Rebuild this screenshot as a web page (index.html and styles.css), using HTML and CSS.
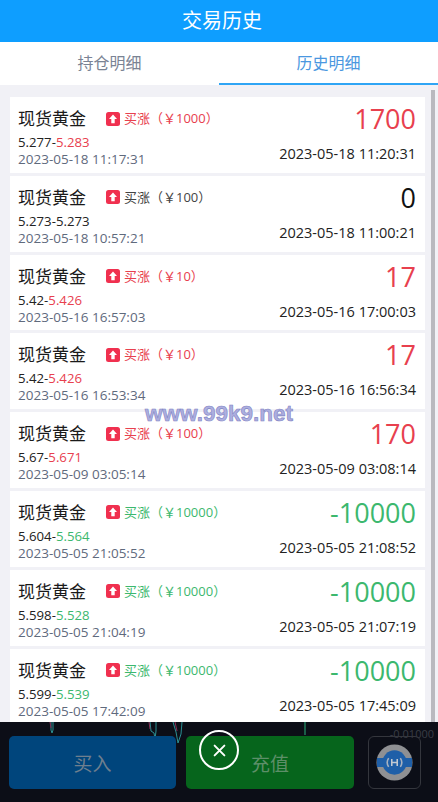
FILE: index.html
```html
<!DOCTYPE html>
<html lang="zh-CN">
<head>
<meta charset="utf-8">
<title>交易历史</title>
<link rel="stylesheet" href="styles.css">
</head>
<body>
<div class="app">
  <header class="header">交易历史</header>
  <nav class="tabs">
    <div class="tab">持仓明细</div>
    <div class="tab active">历史明细</div>
  </nav>
  <main class="list">
    <div class="scrollbar"></div>
    <article class="card">
      <div class="left">
        <div class="title"><span class="name">现货黄金</span><svg class="arrow" viewBox="0 0 14 14"><rect width="14" height="14" rx="2.5" fill="#f0304f"/><path d="M7 2.6 11 7H8.7v4.2H5.3V7H3z" fill="#fff"/></svg><span class="tag red">买涨（￥1000）</span></div>
        <div class="price">5.277-<span class="red">5.283</span></div>
        <div class="time">2023-05-18 11:17:31</div>
      </div>
      <div class="right"><div class="amount red">1700</div><div class="closed">2023-05-18 11:20:31</div></div>
    </article>
    <article class="card">
      <div class="left">
        <div class="title"><span class="name">现货黄金</span><svg class="arrow" viewBox="0 0 14 14"><rect width="14" height="14" rx="2.5" fill="#f0304f"/><path d="M7 2.6 11 7H8.7v4.2H5.3V7H3z" fill="#fff"/></svg><span class="tag">买涨（￥100）</span></div>
        <div class="price">5.273-<span>5.273</span></div>
        <div class="time">2023-05-18 10:57:21</div>
      </div>
      <div class="right"><div class="amount">0</div><div class="closed">2023-05-18 11:00:21</div></div>
    </article>
    <article class="card">
      <div class="left">
        <div class="title"><span class="name">现货黄金</span><svg class="arrow" viewBox="0 0 14 14"><rect width="14" height="14" rx="2.5" fill="#f0304f"/><path d="M7 2.6 11 7H8.7v4.2H5.3V7H3z" fill="#fff"/></svg><span class="tag red">买涨（￥10）</span></div>
        <div class="price">5.42-<span class="red">5.426</span></div>
        <div class="time">2023-05-16 16:57:03</div>
      </div>
      <div class="right"><div class="amount red">17</div><div class="closed">2023-05-16 17:00:03</div></div>
    </article>
    <article class="card">
      <div class="left">
        <div class="title"><span class="name">现货黄金</span><svg class="arrow" viewBox="0 0 14 14"><rect width="14" height="14" rx="2.5" fill="#f0304f"/><path d="M7 2.6 11 7H8.7v4.2H5.3V7H3z" fill="#fff"/></svg><span class="tag red">买涨（￥10）</span></div>
        <div class="price">5.42-<span class="red">5.426</span></div>
        <div class="time">2023-05-16 16:53:34</div>
      </div>
      <div class="right"><div class="amount red">17</div><div class="closed">2023-05-16 16:56:34</div></div>
    </article>
    <article class="card">
      <div class="left">
        <div class="title"><span class="name">现货黄金</span><svg class="arrow" viewBox="0 0 14 14"><rect width="14" height="14" rx="2.5" fill="#f0304f"/><path d="M7 2.6 11 7H8.7v4.2H5.3V7H3z" fill="#fff"/></svg><span class="tag red">买涨（￥100）</span></div>
        <div class="price">5.67-<span class="red">5.671</span></div>
        <div class="time">2023-05-09 03:05:14</div>
      </div>
      <div class="right"><div class="amount red">170</div><div class="closed">2023-05-09 03:08:14</div></div>
    </article>
    <article class="card">
      <div class="left">
        <div class="title"><span class="name">现货黄金</span><svg class="arrow" viewBox="0 0 14 14"><rect width="14" height="14" rx="2.5" fill="#f0304f"/><path d="M7 2.6 11 7H8.7v4.2H5.3V7H3z" fill="#fff"/></svg><span class="tag green">买涨（￥10000）</span></div>
        <div class="price">5.604-<span class="green">5.564</span></div>
        <div class="time">2023-05-05 21:05:52</div>
      </div>
      <div class="right"><div class="amount green">-10000</div><div class="closed">2023-05-05 21:08:52</div></div>
    </article>
    <article class="card">
      <div class="left">
        <div class="title"><span class="name">现货黄金</span><svg class="arrow" viewBox="0 0 14 14"><rect width="14" height="14" rx="2.5" fill="#f0304f"/><path d="M7 2.6 11 7H8.7v4.2H5.3V7H3z" fill="#fff"/></svg><span class="tag green">买涨（￥10000）</span></div>
        <div class="price">5.598-<span class="green">5.528</span></div>
        <div class="time">2023-05-05 21:04:19</div>
      </div>
      <div class="right"><div class="amount green">-10000</div><div class="closed">2023-05-05 21:07:19</div></div>
    </article>
    <article class="card">
      <div class="left">
        <div class="title"><span class="name">现货黄金</span><svg class="arrow" viewBox="0 0 14 14"><rect width="14" height="14" rx="2.5" fill="#f0304f"/><path d="M7 2.6 11 7H8.7v4.2H5.3V7H3z" fill="#fff"/></svg><span class="tag green">买涨（￥10000）</span></div>
        <div class="price">5.599-<span class="green">5.539</span></div>
        <div class="time">2023-05-05 17:42:09</div>
      </div>
      <div class="right"><div class="amount green">-10000</div><div class="closed">2023-05-05 17:45:09</div></div>
    </article>
  </main>
  <footer class="bar">
    <svg class="chart" viewBox="0 0 438 80" preserveAspectRatio="none">
      <path d="M51 0V8l1 3 1-3V0M150 0l1 9 3 2 1 6 1-8V0M173 0l3 10 2 11 3-9 1-12" fill="none" stroke="#2b8f93" stroke-width="1"/>
      <path d="M50 0l1 6M149 0l1 7M175 0l2 9" fill="none" stroke="#8a2d55" stroke-width="1"/>
      <path d="M305 0V13" stroke="#1f7a5a" stroke-width="1.5"/>
    </svg>
    <span class="tick">-0.01000</span>
    <button class="btn buy">买入</button>
    <button class="btn pay">充值</button>
    <div class="logo-box">
      <svg class="logo" viewBox="0 0 38 38">
        <circle cx="19" cy="19" r="18.500" fill="#8f9093"/>
        <path d="M1 14.500H37V23.500H1z" fill="#1f5fa8"/>
        <circle cx="19" cy="19" r="12.500" fill="#1f5fa8"/>
        <path d="M13 14.500a8 8 0 0 0 0 9M25 14.500a8 8 0 0 1 0 9" fill="none" stroke="#a8b2c0" stroke-width="1.600"/>
        <path d="M16.200 15.500v7M21.800 15.500v7M16.200 19h5.600" fill="none" stroke="#c3c9d2" stroke-width="1.600"/>
      </svg>
    </div>
    <div class="close"><svg viewBox="0 0 12 12"><path d="M1.500 1.500l9 9M10.500 1.500l-9 9" stroke="#fff" stroke-width="1.800" stroke-linecap="round"/></svg></div>
  </footer>
  <div class="watermark">www.99k9.net</div>
</div>
</body>
</html>
```
FILE: styles.css
```css
* { box-sizing: border-box; margin: 0; padding: 0; }
html, body { height: 100%; overflow: hidden; }
body { font-family: "Open Sans", "Noto Sans CJK SC", sans-serif; background: #f1f1f6; }
.app { position: relative; width: 438px; height: 802px; display: flex; flex-direction: column; overflow: hidden; }
.header { height: 42px; flex: none; background: #0e9eff; color: #fff; font-size: 20px; line-height: 42px; text-align: center; padding-left: 6px; }
.tabs { height: 43px; flex: none; display: flex; background: #fff; }
.tab { flex: 1; text-align: center; font-size: 16px; line-height: 43px; color: #7a8394; }
.tab.active { color: #4a97e0; border-bottom: 2px solid #2fa5f5; }
.list { position: relative; flex: 1; min-height: 0; overflow: hidden; padding: 12px 13px 0 10px; display: flex; flex-direction: column; gap: 3px; }
.scrollbar { position: absolute; top: 5px; right: 3px; width: 4px; bottom: 0; background: #b9b9bf; }
.card { flex: none; height: 75.800px; background: #fff; display: flex; justify-content: space-between; padding: 9px 9px 0 8px; }
.left { display: flex; flex-direction: column; }
.title { display: flex; align-items: center; height: 23px; }
.name { font-size: 17px; color: #1a1a1a; width: 88px; }
.arrow { width: 14px; height: 14px; margin: 2px 4px 0 0; }
.tag { font-size: 13px; color: #444; }
.price { font-size: 13.200px; line-height: 15px; color: #222; margin-top: 6px; }
.time { font-size: 13.500px; line-height: 17px; color: #5f6a7d; margin-top: 1px; }
.right { display: flex; flex-direction: column; align-items: flex-end; }
.amount { font-size: 27px; line-height: 30px; color: #111; margin-top: -2px; }
.closed { font-size: 14.500px; line-height: 18px; color: #222; margin-top: 11px; }
.red { color: #e8404e; }
.green { color: #3cb86e; }
.bar { position: relative; flex: none; height: 80px; background: #0c0e17; display: flex; padding: 14px 17px 13px 9px; gap: 10px; }
.chart { position: absolute; left: 0; top: 0; width: 438px; height: 80px; }
.tick { position: absolute; right: 4px; top: 4px; font-size: 11px; color: #3a3d45; }
.btn { position: relative; border: 0; border-radius: 5px; height: 53px; font-family: inherit; font-size: 19px; color: #6f7f8e; }
.buy { width: 167px; background: #00457c; }
.pay { width: 168px; background: #06651c; color: #5d8f68; }
.logo-box { position: relative; width: 53px; height: 53px; margin-left: 4px; border: 1px solid #34363d; border-radius: 6px; display: flex; align-items: center; justify-content: center; }
.logo { width: 37px; height: 37px; }
.close { position: absolute; left: 199px; top: 8px; width: 40px; height: 40px; border: 2px solid #fff; border-radius: 50%; display: flex; align-items: center; justify-content: center; }
.close svg { width: 13px; height: 13px; }
.watermark { position: absolute; left: 145px; top: 401px; font-family: "Liberation Sans", sans-serif; font-size: 22.500px; font-weight: 700; line-height: 26px; color: #adafdf; -webkit-text-stroke: 0.6px #7f83c4; }
```
